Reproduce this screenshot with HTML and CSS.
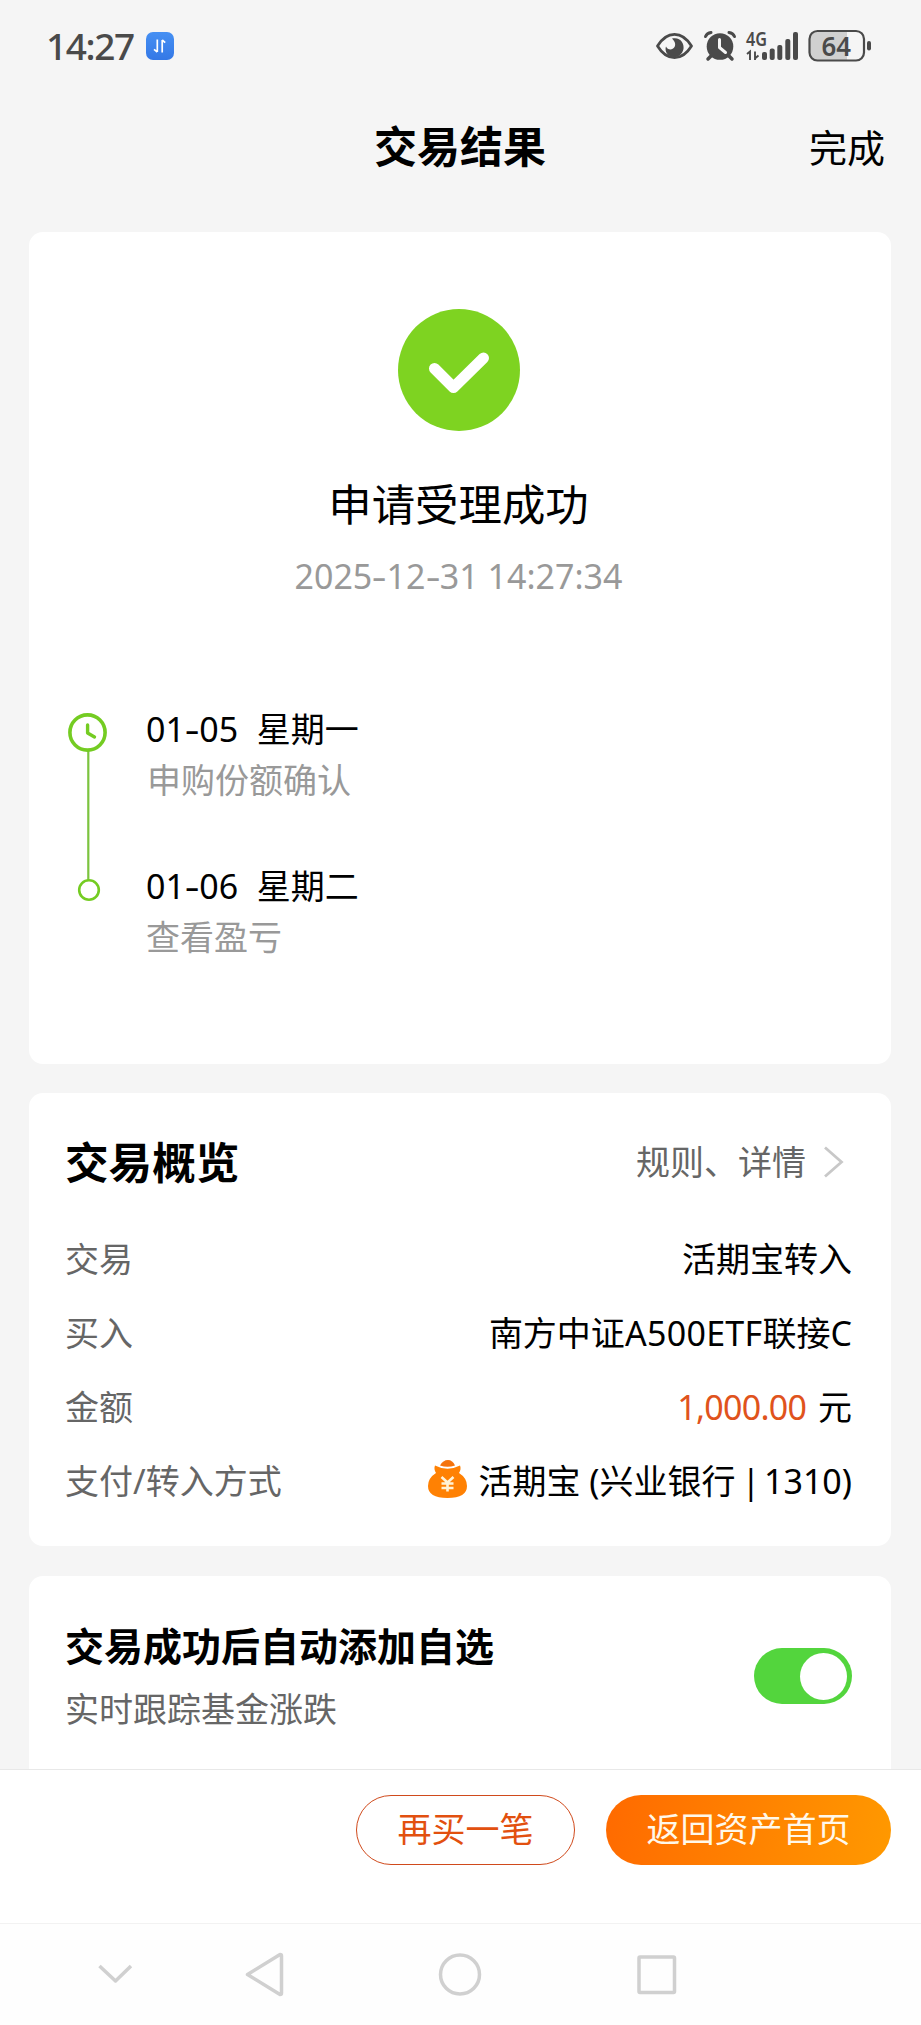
FILE: index.html
```html
<!DOCTYPE html>
<html lang="zh-CN">
<head>
<meta charset="utf-8">
<title>交易结果</title>
<link rel="stylesheet" href="styles.css">
</head>
<body>
<div class="screen">
  <header class="status">
    <span class="clock">14:27</span>
    <svg class="app-badge" width="28" height="28" viewBox="0 0 28 28">
      <defs><linearGradient id="badge" x1="0" y1="0" x2="0" y2="1"><stop offset="0" stop-color="#4690f3"/><stop offset="1" stop-color="#3478e6"/></linearGradient></defs>
      <rect width="28" height="28" rx="7" fill="url(#badge)"/>
      <path d="M11.3 7.5V20M11.3 20l-3.3-2.7M16.2 20.5V8M16.2 8l3 2.7" fill="none" stroke="#fff" stroke-width="1.7"/>
    </svg>
    <svg class="indicators" width="217" height="52" viewBox="655 20 217 52">
      <g fill="none" stroke="#4a4a4a">
        <path d="M657.5 46C667 30.500 682 30.500 691.500 46C682 61.500 667 61.500 657.500 46Z" stroke-width="2.8" stroke-linejoin="round"/>
        <path d="M705.500 36.500Q707 33 711 32.500M734.500 36.500Q733 33 729 32.500" stroke-width="3" stroke-linecap="round"/>
        <path d="M712 55l-4 4M728 55l4 4" stroke-width="3.500" stroke-linecap="round"/>
      </g>
      <path d="M672 38.500C680 36.500 684.500 43 683.500 49C682 56 675 59 670 56C666 54 664.800 49.500 666 46.500C667.500 50 672.500 50.500 674.500 47C676.200 44 674.500 41 672 38.500Z" fill="#4a4a4a"/>
      <circle cx="720" cy="46.500" r="13.300" fill="#4a4a4a"/>
      <path d="M719.500 39.500V47.500L725.500 52.500" fill="none" stroke="#f5f5f5" stroke-width="3" stroke-linecap="round" stroke-linejoin="round"/>
      <text class="net" x="746" y="46" textLength="21" lengthAdjust="spacingAndGlyphs">4G</text>
      <path d="M747 54l3-2.500V60M755 51.500V60M755.500 58l3-2.500" fill="none" stroke="#4a4a4a" stroke-width="1.900"/>
      <g fill="#4a4a4a">
        <rect x="762" y="52" width="5" height="8" rx="2"/>
        <rect x="769.700" y="48.500" width="5" height="11.500" rx="2"/>
        <rect x="777.300" y="45" width="5" height="15" rx="2"/>
        <rect x="785.300" y="39" width="5" height="21" rx="2"/>
        <rect x="793" y="32" width="5" height="28" rx="2"/>
        <rect x="867" y="41" width="4" height="9.500" rx="2"/>
      </g>
      <path d="M818 32H847V60H818Q810 60 810 52V40Q810 32 818 32Z" fill="#d0d0d0"/>
      <rect x="809.500" y="31" width="54.500" height="29.500" rx="8" fill="none" stroke="#4a4a4a" stroke-width="2.200"/>
      <text class="charge" x="821.500" y="55.500" textLength="29.500" lengthAdjust="spacingAndGlyphs">64</text>
    </svg>
  </header>

  <nav class="titlebar">
    <h1 class="title">交易结果</h1>
    <span class="done">完成</span>
  </nav>

  <main class="content">
    <section class="card result">
      <svg width="122" height="122" viewBox="0 0 122 122">
        <circle cx="61" cy="61" r="61" fill="#7ed321"/>
        <path d="M36.500 59.500L55.500 78.500L85.500 49" fill="none" stroke="#fff" stroke-width="11" stroke-linecap="round" stroke-linejoin="round"/>
      </svg>
      <h2 class="result-title">申请受理成功</h2>
      <p class="result-time">2025<i class="dash">-</i>12<i class="dash">-</i>31 14:27:34</p>
      <div class="timeline">
        <svg class="rail" width="40" height="190" viewBox="0 0 40 190" fill="none">
          <path d="M20.300 38V168" stroke="#7cc43f" stroke-width="2.200"/>
          <circle cx="19.500" cy="19.500" r="17.600" stroke="#74cc22" stroke-width="3.600"/>
          <path d="M19.600 12V20L26.500 24" stroke="#74cc22" stroke-width="3.400" stroke-linecap="round" stroke-linejoin="round"/>
          <circle cx="21" cy="177" r="9.800" stroke="#74cc22" stroke-width="2.600"/>
        </svg>
        <ol class="steps">
          <li class="step"><p class="step-date"><span>01<i class="dash">-</i>05</span><span>星期一</span></p><p class="step-note indent">申购份额确认</p></li>
          <li class="step"><p class="step-date"><span>01<i class="dash">-</i>06</span><span>星期二</span></p><p class="step-note">查看盈亏</p></li>
        </ol>
      </div>
    </section>

    <section class="card overview">
      <div class="overview-head">
        <h2 class="overview-title">交易概览</h2>
        <a class="details">规则、详情
          <svg width="21" height="32" viewBox="0 0 21 32"><path d="M2 1.500L18.500 16L2 30.500" fill="none" stroke="#c8c8c8" stroke-width="2.800"/></svg>
        </a>
      </div>
      <dl class="rows">
        <div class="row"><dt>交易</dt><dd>活期宝转入</dd></div>
        <div class="row"><dt>买入</dt><dd class="fund">南方中证<span class="latin">A500ETF</span>联接C</dd></div>
        <div class="row"><dt>金额</dt><dd><span class="amount">1,000.00</span> 元</dd></div>
        <div class="row"><dt>支付/转入方式</dt><dd class="pay">
          <svg width="39" height="39" viewBox="0 0 39 39">
            <path d="M12 5.500Q15 0 20 0Q24.500 0 27 5.500Q19.500 8 12 5.500Z" fill="#f5730c"/>
            <path d="M7 5.500Q19.500 12 32 5.500Q33.500 9 31 13Q39 18 39 26Q39 38 19.500 38Q0 38 0 26Q0 18 8 13Q5.500 9 7 5.500Z" fill="#ff8103"/>
            <path d="M13.500 17L19.500 22.500L25.500 17M19.500 22V31.500M13.500 23.500H25.500M13.500 28H25.500" fill="none" stroke="#fff3d8" stroke-width="2.600"/>
          </svg>
          <span class="bank">活期宝 (兴业银行<span class="bar"> | </span>1310)</span></dd></div>
      </dl>
    </section>

    <section class="card watch">
      <div>
        <h2 class="watch-title">交易成功后自动添加自选</h2>
        <p class="watch-note">实时跟踪基金涨跌</p>
      </div>
      <span class="toggle"><span class="knob"></span></span>
    </section>
  </main>

  <div class="actions">
    <button class="btn again">再买一笔</button>
    <button class="btn home">返回资产首页</button>
  </div>

  <footer class="sysnav">
    <svg width="921" height="101" viewBox="0 1924 921 101" fill="none" stroke="#d0d0d0" stroke-width="3.500" stroke-linejoin="round">
      <path d="M99.500 1966L115.500 1981L131 1966"/>
      <path d="M247.500 1974.500L280 1954.500Q281.500 1954.500 281.500 1956V1993Q281.500 1994.500 280 1994.500Z"/>
      <circle cx="460" cy="1974.500" r="19.500"/>
      <rect x="639" y="1957" width="35.500" height="35.500" rx="1"/>
    </svg>
  </footer>
</div>
</body>
</html>
```

FILE: styles.css
```css
* {
  box-sizing: border-box;
  margin: 0;
  padding: 0;
}

body {
  font-family: "Noto Sans", "Noto Sans CJK SC", sans-serif;
  font-size: 34px;
  line-height: 42px;
  color: #000;
  background: #f5f5f5;
}

svg {
  display: block;
  flex-shrink: 0;
}

.screen {
  display: flex;
  flex-direction: column;
  width: 921px;
  height: 2025px;
  overflow: hidden;
}

.status {
  display: flex;
  align-items: center;
  height: 92px;
  padding: 0 49px 0 46px;
}

.clock {
  width: 100px;
  font-size: 37px;
  font-weight: 500;
  letter-spacing: -1.4px;
  color: #4a4a4a;
}

.indicators {
  margin-left: auto;
  overflow: visible;
}

.net {
  font: 600 19px "Noto Sans", sans-serif;
  fill: #4a4a4a;
}

.charge {
  font: 600 26.500px "Noto Sans", sans-serif;
  fill: #4a4a4a;
}

.titlebar {
  display: grid;
  grid-template-columns: 1fr auto 1fr;
  align-items: center;
  height: 110px;
  padding: 0 36px 0 35px;
}

.title {
  grid-column: 2;
  font-size: 43px;
  line-height: 60px;
}

.done {
  justify-self: end;
  font-size: 38px;
  line-height: 56px;
}

.content {
  display: flex;
  flex-direction: column;
  gap: 29px;
  flex: 1;
  min-height: 0;
  padding: 30px 30px 0 29px;
  overflow: hidden;
}

.card {
  flex-shrink: 0;
  background: #fff;
  border-radius: 14px;
}

.result {
  display: flex;
  flex-direction: column;
  align-items: center;
  height: 832px;
  padding: 77px 3px 0 0;
}

.result-title {
  margin-top: 44px;
  font-size: 43.400px;
  font-weight: 400;
  line-height: 60px;
}

.result-time {
  margin-top: 21px;
  line-height: 40px;
  color: #999;
  white-space: nowrap;
}

.dash {
  display: inline-block;
  font-style: normal;
  transform: scaleX(1.35);
  padding: 0 1.700px;
}

.timeline {
  display: flex;
  align-self: stretch;
  gap: 38px;
  margin-top: 112px;
  padding-left: 39px;
}

.rail {
  margin-top: 5px;
}

.steps {
  list-style: none;
}

.step {
  height: 157px;
}

.step-date {
  display: flex;
  gap: 18.500px;
}

.step-note {
  margin-top: 9px;
  color: #999;
}

.indent {
  padding-left: 1px;
}

.overview {
  height: 453px;
  padding: 39px 39px 0 36px;
}

.overview-head {
  display: flex;
  align-items: center;
  justify-content: space-between;
  height: 60px;
}

.overview-title {
  font-size: 43.600px;
  line-height: 60px;
}

.details {
  display: flex;
  align-items: center;
  gap: 17px;
  padding-right: 8px;
  color: #666;
}

.rows {
  margin-top: 30px;
}

.row {
  display: flex;
  align-items: center;
  justify-content: space-between;
  height: 74px;
}

.row dt {
  color: #666;
}

.latin {
  letter-spacing: 0.300px;
}

.amount {
  margin-right: 3px;
  letter-spacing: -0.750px;
  color: #e0531c;
}

.pay {
  display: flex;
  align-items: center;
  gap: 12px;
}

.pay svg {
  margin-top: -4px;
}

.bar {
  letter-spacing: -3px;
  margin-right: 1px;
}

.watch {
  display: flex;
  align-items: flex-start;
  justify-content: space-between;
  height: 230px;
  margin-top: 1px;
  padding: 43px 39px 0 36px;
}

.watch-title {
  font-size: 39px;
  line-height: 54px;
}

.watch-note {
  margin-top: 15px;
  color: #666;
}

.toggle {
  display: flex;
  justify-content: flex-end;
  width: 98px;
  height: 56px;
  margin-top: 29px;
  padding: 4.500px 5px;
  border-radius: 28px;
  background: #53d53d;
}

.knob {
  width: 47px;
  height: 47px;
  border-radius: 50%;
  background: #fff;
}

.actions {
  display: flex;
  justify-content: flex-end;
  gap: 31px;
  height: 154px;
  padding: 25px 30px 0 0;
  border-top: 1px solid #e8e8e8;
  background: #fff;
}

.btn {
  height: 70px;
  padding-bottom: 2px;
  border: 0;
  border-radius: 35px;
  font: inherit;
}

.again {
  width: 219px;
  border: 1px solid #d04a1c;
  background: #fff;
  color: #e2500f;
}

.home {
  width: 285px;
  background: linear-gradient(100deg, #ff6a00, #ff9900);
  color: #fff8ea;
}

.sysnav {
  height: 102px;
  border-top: 1px solid #f2f2f2;
  background: #fefefe;
}
```
